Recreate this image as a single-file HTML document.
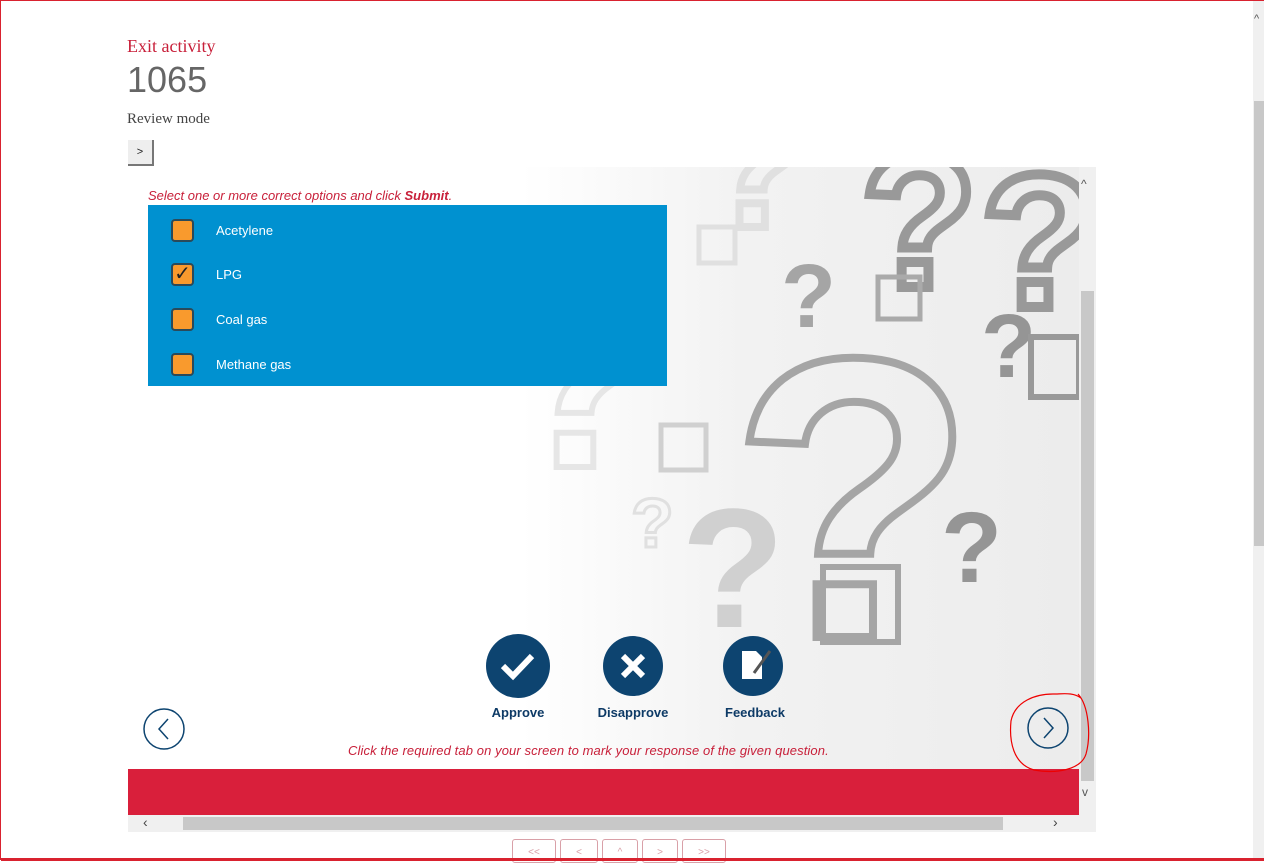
<!DOCTYPE html>
<html><head><meta charset="utf-8"><style>
*{margin:0;padding:0;box-sizing:border-box}
body{width:1264px;height:860px;overflow:hidden;background:#fff;position:relative;font-family:"Liberation Sans",sans-serif;border:1px solid #d9222f}
.abs{position:absolute}
</style></head><body>
<div class="abs" style="left:126px;top:35px;color:#c8203a;font:18px 'Liberation Serif',serif">Exit activity</div>
<div class="abs" style="left:126px;top:58px;color:#666;font:36px 'Liberation Sans',sans-serif">1065</div>
<div class="abs" style="left:126px;top:110px;color:#444;font:15px 'Liberation Serif',serif">Review mode</div>
<div class="abs" style="left:127px;top:139px;width:26px;height:26px;background:#eee;border-right:2px solid #777;border-bottom:2px solid #777;font-size:11px;text-align:center;line-height:24px;color:#222">&gt;</div>

<div class="abs" style="left:127px;top:166px;width:968px;height:665px;background:#fff;overflow:hidden">
 <div class="abs" style="left:393px;top:0;width:558px;height:602px;background:linear-gradient(90deg,#fff 0%,#f2f2f2 40%,#ececec 100%)">
 <svg width="558" height="602" style="position:absolute;left:0;top:0" font-family="Liberation Sans" font-weight="bold">
  <text x="-20" y="300" font-size="260" fill="none" stroke="#e6e6e6" stroke-width="6">?</text>
  <text x="180" y="60" font-size="180" fill="none" stroke="#e0e0e0" stroke-width="8">?</text>
  <text x="340" y="120" font-size="190" fill="none" stroke="#999" stroke-width="10">?</text>
  <text x="460" y="140" font-size="190" fill="none" stroke="#999" stroke-width="10">?</text>
  <text x="260" y="160" font-size="90" fill="#a5a5a5">?</text>
  <text x="460" y="210" font-size="90" fill="#959595">?</text>
  <text x="210" y="470" font-size="400" fill="none" stroke="#a5a5a5" stroke-width="8">?</text>
  <text x="160" y="460" font-size="170" fill="#d0d0d0">?</text>
  <text x="420" y="415" font-size="100" fill="#959595">?</text>
  <text x="110" y="380" font-size="70" fill="none" stroke="#e0e0e0" stroke-width="3">?</text>
  <rect x="178" y="60" width="36" height="36" fill="none" stroke="#e0e0e0" stroke-width="5"/>
  <rect x="357" y="110" width="42" height="42" fill="none" stroke="#aaa" stroke-width="5"/>
  <rect x="140" y="258" width="45" height="45" fill="none" stroke="#d0d0d0" stroke-width="5"/>
  <rect x="302" y="400" width="75" height="75" fill="none" stroke="#a5a5a5" stroke-width="6"/>
  <rect x="510" y="170" width="48" height="60" fill="none" stroke="#999" stroke-width="6"/>
 </svg>
 </div>
 <div class="abs" style="left:20px;top:21px;color:#c8203a;font:italic 13px 'Liberation Sans',sans-serif">Select one or more correct options and click <b>Submit</b>.</div>
 <div class="abs" style="left:20px;top:38px;width:519px;height:181px;background:#0091d0;color:#fff;font-size:13px">
  <div class="abs" style="left:23px;top:14px;width:23px;height:23px;background:#f99a2d;border:2px solid #2a4a5a;border-radius:4px"></div>
  <div class="abs" style="left:68px;top:18px">Acetylene</div>
  <div class="abs" style="left:23px;top:58px;width:23px;height:23px;background:#f99a2d;border:2px solid #2a4a5a;border-radius:4px;color:#222;font-size:20px;line-height:18px;text-align:center">✓</div>
  <div class="abs" style="left:68px;top:62px">LPG</div>
  <div class="abs" style="left:23px;top:103px;width:23px;height:23px;background:#f99a2d;border:2px solid #2a4a5a;border-radius:4px"></div>
  <div class="abs" style="left:68px;top:107px">Coal gas</div>
  <div class="abs" style="left:23px;top:148px;width:23px;height:23px;background:#f99a2d;border:2px solid #2a4a5a;border-radius:4px"></div>
  <div class="abs" style="left:68px;top:152px">Methane gas</div>
 </div>
 <svg class="abs" style="left:0;top:0" width="968" height="665">
  <circle cx="390" cy="499" r="32" fill="#0d4470"/>
  <path d="M375 499 l10 10 l19 -20" stroke="#fff" stroke-width="6" fill="none"/>
  <circle cx="505" cy="499" r="30" fill="#0d4470"/>
  <path d="M495 489 l20 20 M515 489 l-20 20" stroke="#fff" stroke-width="6"/>
  <circle cx="625" cy="499" r="30" fill="#0d4470"/>
  <path d="M614 484 h14 l6 6 v22 h-20z" fill="#fff"/>
  <path d="M626 506 l16 -22" stroke="#555" stroke-width="3"/>
  <circle cx="36" cy="562" r="20" fill="none" stroke="#0d4470" stroke-width="1.5"/>
  <path d="M40 552 l-9 10 l9 10" fill="none" stroke="#0d4470" stroke-width="1.5"/>
  <circle cx="920" cy="561" r="20" fill="none" stroke="#0d4470" stroke-width="1.5"/>
  <path d="M916 551 l9 10 l-9 10" fill="none" stroke="#0d4470" stroke-width="1.5"/>
 </svg>
 <div class="abs" style="left:345px;top:538px;width:90px;text-align:center;color:#0d3a66;font:bold 13px 'Liberation Sans',sans-serif">Approve</div>
 <div class="abs" style="left:460px;top:538px;width:90px;text-align:center;color:#0d3a66;font:bold 13px 'Liberation Sans',sans-serif">Disapprove</div>
 <div class="abs" style="left:582px;top:538px;width:90px;text-align:center;color:#0d3a66;font:bold 13px 'Liberation Sans',sans-serif">Feedback</div>
 <div class="abs" style="left:220px;top:576px;white-space:nowrap;color:#c8203a;font:italic 13px 'Liberation Sans',sans-serif;letter-spacing:0.1px">Click the required tab on your screen to mark your response of the given question.</div>
 <div class="abs" style="left:0;top:602px;width:951px;height:46px;background:#d91f3b"></div>
 <div class="abs" style="left:951px;top:0;width:17px;height:648px;background:#f0f0f0"></div>
 <div class="abs" style="left:953px;top:124px;width:13px;height:490px;background:#c8c8c8"></div>
 <div class="abs" style="left:953px;top:10px;font-size:12px;color:#555">^</div>
 <div class="abs" style="left:954px;top:618px;font-size:12px;color:#555">v</div>
 <div class="abs" style="left:0;top:648px;width:968px;height:17px;background:#f0f0f0"></div>
 <div class="abs" style="left:55px;top:650px;width:820px;height:13px;background:#c8c8c8"></div>
 <div class="abs" style="left:15px;top:647px;font-size:14px;color:#444">‹</div>
 <div class="abs" style="left:925px;top:647px;font-size:14px;color:#444">›</div>
</div>
<svg class="abs" style="left:1000px;top:685px" width="100" height="90">
 <path d="M77 8 C88 20 90 50 85 68 C80 84 55 88 33 84 C12 78 8 55 10 35 C14 15 35 8 52 8 C62 8 72 6 80 12" fill="none" stroke="#e00" stroke-width="1.2"/>
</svg>
<div class="abs" style="left:1252px;top:0;width:11px;height:860px;background:#f0f0f0"></div>
<div class="abs" style="left:1253px;top:100px;width:10px;height:445px;background:#c8c8c8"></div>
<div class="abs" style="left:1253px;top:12px;font-size:11px;color:#555">^</div>
<div class="abs" style="left:511px;top:838px;display:flex;gap:4px">
 <div style="width:44px;height:24px;border:1px solid #d9a0a8;border-radius:3px;font-size:10px;color:#d9a0a8;text-align:center;line-height:26px">&lt;&lt;</div>
 <div style="width:38px;height:24px;border:1px solid #d9a0a8;border-radius:3px;font-size:10px;color:#d9a0a8;text-align:center;line-height:26px">&lt;</div>
 <div style="width:36px;height:24px;border:1px solid #d9a0a8;border-radius:3px;font-size:10px;color:#d9a0a8;text-align:center;line-height:26px">^</div>
 <div style="width:36px;height:24px;border:1px solid #d9a0a8;border-radius:3px;font-size:10px;color:#d9a0a8;text-align:center;line-height:26px">&gt;</div>
 <div style="width:44px;height:24px;border:1px solid #d9a0a8;border-radius:3px;font-size:10px;color:#d9a0a8;text-align:center;line-height:26px">&gt;&gt;</div>
</div>
<div class="abs" style="left:0;top:857px;width:1264px;height:3px;background:#d9222f"></div>
</body></html>
